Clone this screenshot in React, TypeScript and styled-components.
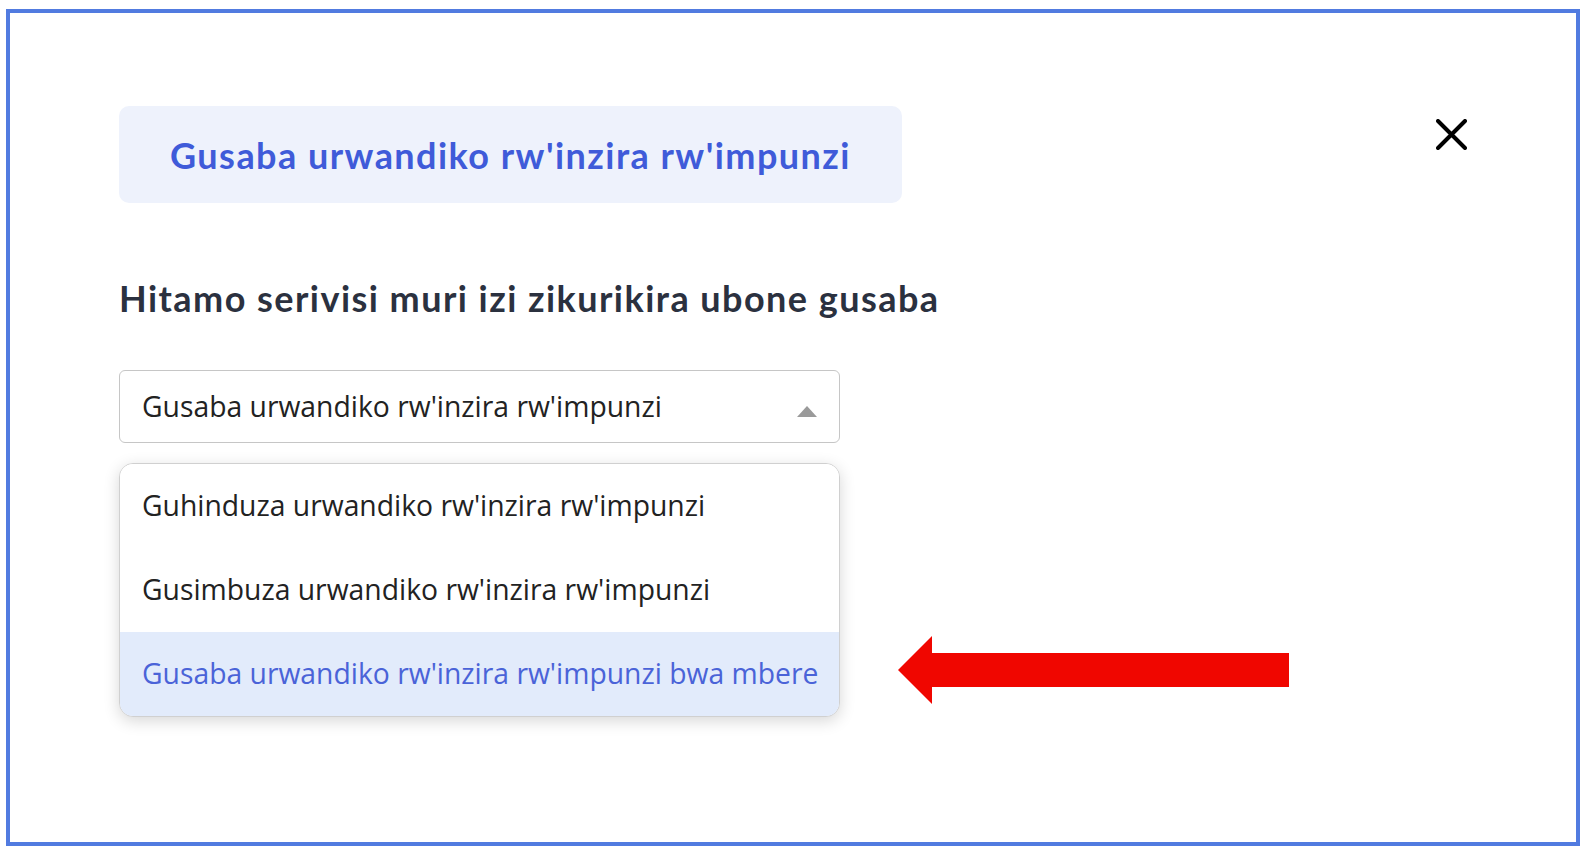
import React from "react";
import styled, { createGlobalStyle } from "styled-components";

const GlobalStyle = createGlobalStyle`
  html, body { margin: 0; padding: 0; background: #ffffff; }
  * { box-sizing: border-box; }
`;

const Page = styled.div`
  padding: 9px 4px 6px 6px;
  background: #ffffff;
`;

const Frame = styled.div`
  height: 837px;
  border: 4px solid #517be0;
  padding: 93px 109px 0 109px;
  display: flex;
  flex-direction: column;
`;

const TopRow = styled.div`
  display: flex;
  justify-content: space-between;
  align-items: flex-start;
`;

const TitleBox = styled.div`
  width: 783px;
  height: 97px;
  background: #eef2fc;
  border-radius: 10px;
  display: flex;
  align-items: center;
  justify-content: center;
  font-family: Lato, "Noto Sans", sans-serif;
  font-weight: 700;
  font-size: 36px;
  letter-spacing: 1.45px;
  color: #3f5bd9;
`;

const CloseButton = styled.button`
  margin-top: 13px;
  width: 31px;
  height: 31px;
  padding: 0;
  border: none;
  background: transparent;
  display: flex;
`;

const Heading = styled.h2`
  margin: 73px 0 0 0;
  font-family: Lato, "Noto Sans", sans-serif;
  font-weight: 700;
  font-size: 36px;
  letter-spacing: 1.45px;
  line-height: 44px;
  color: #2b313f;
`;

const SelectBox = styled.div`
  margin-top: 50px;
  width: 721px;
  height: 73px;
  border: 1.5px solid #c6c6c6;
  border-radius: 6px;
  padding: 0 22px 2px 22px;
  display: flex;
  align-items: center;
  justify-content: space-between;
  font-family: "Open Sans", "Noto Sans", sans-serif;
  font-size: 28.3px;
  color: #222222;
  white-space: nowrap;
`;

const Caret = styled.span`
  width: 0;
  height: 0;
  border-left: 10px solid transparent;
  border-right: 10px solid transparent;
  border-bottom: 11px solid #9a9a9a;
  margin-top: 12px;
`;

const MenuRow = styled.div`
  margin-top: 20px;
  display: flex;
  align-items: flex-end;
  gap: 58px;
`;

const Menu = styled.div`
  width: 721px;
  flex-shrink: 0;
  border: 1.5px solid #d0d0d0;
  border-radius: 14px;
  overflow: hidden;
  background: #ffffff;
  box-shadow: 0 4px 16px rgba(0, 0, 0, 0.16);
`;

const Option = styled.div<{ $active?: boolean }>`
  height: 84px;
  padding: 0 0 3px 22px;
  display: flex;
  align-items: center;
  white-space: nowrap;
  font-family: "Open Sans", "Noto Sans", sans-serif;
  font-size: 28.3px;
  color: ${(p) => (p.$active ? "#4a63d8" : "#222222")};
  background: ${(p) => (p.$active ? "#e2ebfb" : "#ffffff")};
`;

const ArrowWrap = styled.div`
  margin-bottom: 13px;
  display: flex;
`;

export default function App() {
  return (
    <>
      <GlobalStyle />
      <Page>
        <Frame>
          <TopRow>
            <TitleBox>Gusaba urwandiko rw'inzira rw'impunzi</TitleBox>
            <CloseButton aria-label="close">
              <svg width="31" height="31" viewBox="0 0 31 31">
                <path d="M2 2 L29 29 M29 2 L2 29" stroke="#000" strokeWidth="4" strokeLinecap="round" />
              </svg>
            </CloseButton>
          </TopRow>
          <Heading>Hitamo serivisi muri izi zikurikira ubone gusaba</Heading>
          <SelectBox>
            <span>Gusaba urwandiko rw'inzira rw'impunzi</span>
            <Caret />
          </SelectBox>
          <MenuRow>
            <Menu>
              <Option>Guhinduza urwandiko rw'inzira rw'impunzi</Option>
              <Option>Gusimbuza urwandiko rw'inzira rw'impunzi</Option>
              <Option $active>Gusaba urwandiko rw'inzira rw'impunzi bwa mbere</Option>
            </Menu>
            <ArrowWrap>
              <svg width="391" height="68" viewBox="0 0 391 68">
                <polygon points="0,34 34,0 34,17 391,17 391,51 34,51 34,68" fill="#f00600" />
              </svg>
            </ArrowWrap>
          </MenuRow>
        </Frame>
      </Page>
    </>
  );
}
